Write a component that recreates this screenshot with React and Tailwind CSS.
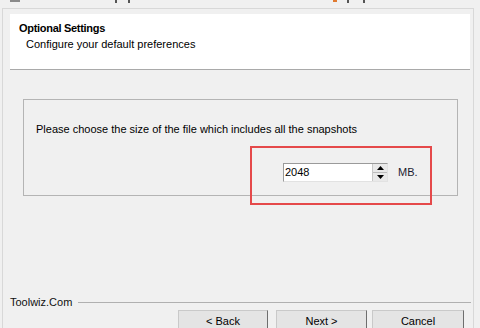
import React from 'react';

const font = { fontFamily: '"Liberation Sans", Arial, sans-serif' };

const Spinner = () => (
    <div className="flex flex-col w-[15px] h-[17px] border-l border-[#c8c8c8] bg-[#e9e9e9]">
        <div className="flex-1 flex items-center justify-center border-b border-[#bcbcbc]">
            <svg width="7" height="4" viewBox="0 0 7 4"><path d="M0 4 L3.5 0 L7 4 Z" fill="#000" /></svg>
        </div>
        <div className="flex-1 flex items-center justify-center">
            <svg width="7" height="4" viewBox="0 0 7 4"><path d="M0 0 L3.5 4 L7 0 Z" fill="#000" /></svg>
        </div>
    </div>
);

const WizButton = ({ label, className }) => (
    <button
        className={`h-[23px] bg-[#e4e4e4] border border-[#c9c9c9] border-r-[#6e6e6e] text-[11px] leading-[13px] text-black flex items-center justify-center ${className}`}
    >
        {label}
    </button>
);

const App = () => {

    return (
        <div className="w-[480px] h-[328px] overflow-hidden bg-[#f0f0f0] text-black" style={font}>

            {/* cropped title bar remains */}
            <div className="h-[8px] flex items-start">
                <div className="ml-[10px] mt-0 w-[10px] h-[2px] bg-[#8a8a8a]"></div>
                <div className="ml-[95px] w-[2px] h-[3px] bg-[#555]"></div>
                <div className="ml-[11px] w-[2px] h-[3px] bg-[#555]"></div>
                <div className="ml-[203px] w-[4px] h-[2px] bg-[#e07a30]"></div>
                <div className="ml-[10px] w-[2px] h-[3px] bg-[#555]"></div>
                <div className="ml-[14px] w-[2px] h-[3px] bg-[#555]"></div>
            </div>

            <div className="ml-[2px] w-[472px] h-[320px] border-l border-r border-t border-[#d8d8d8] pt-[5px] pl-[7px] pr-[2px]">

                <div className="w-[460px] h-[56px] bg-white border-b border-[#a9a9a9] pl-[9px] pt-[8px]">
                    <div className="text-[11px] leading-[13px] font-bold tracking-[-0.3px]">Optional Settings</div>
                    <div className="text-[11px] leading-[13px] mt-[3px] ml-[7px]">Configure your default preferences</div>
                </div>

                <div className="ml-[13px] mt-[29px] w-[435px] h-[97px] border border-[#b4b4b4] pl-[12px] pt-[23px]">
                    <div className="text-[11px] leading-[13px]">Please choose the size of the file which includes all the snapshots</div>

                    <div className="ml-[214px] mt-[10px] w-[182px] h-[59px] border-2 border-[#e5494a] pl-[31px] pt-[15px] flex items-start">
                        <div className="w-[105px] h-[19px] bg-white border border-[#9a9a9a] border-r-[#e2e2e2] border-b-[#e2e2e2] flex">
                            <div className="flex-1 text-[11px] leading-[17px] pl-[1px]">2048</div>
                            <Spinner />
                        </div>
                        <div className="ml-[10px] text-[11px] leading-[19px] text-[#1c1c30]">MB.</div>
                    </div>
                </div>

                <div className="mt-[100px] flex items-center">
                    <div className="text-[11px] leading-[13px] text-[#111]">Toolwiz.Com</div>
                    <div className="flex-1 ml-[6px] h-px bg-[#b0b0b0]"></div>
                </div>

                <div className="mt-[1px] flex">
                    <WizButton label="< Back" className="ml-[168px] w-[90px]" />
                    <WizButton label="Next >" className="ml-[8px] w-[91px]" />
                    <WizButton label="Cancel" className="ml-[5px] w-[92px]" />
                </div>
            </div>
        </div>
    );
}

export default App;
